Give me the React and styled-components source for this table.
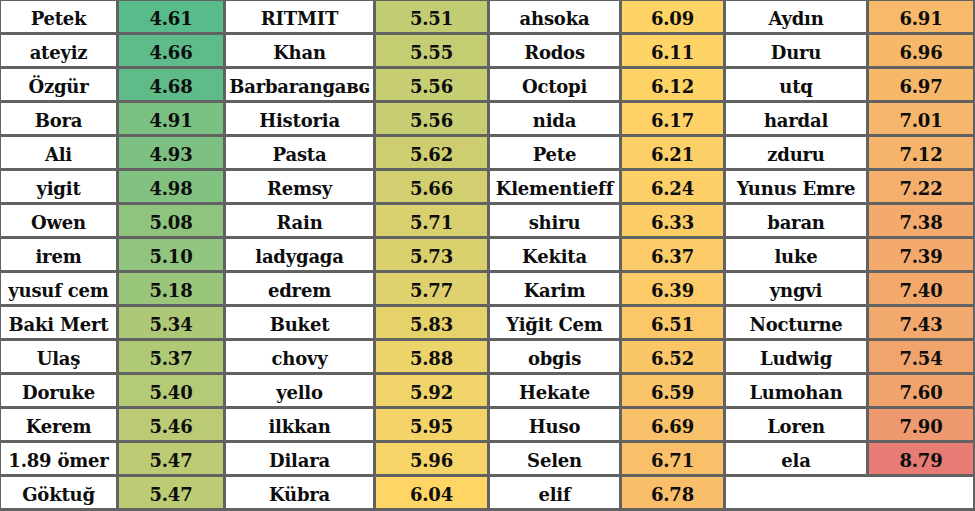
import React from "react";
import styled, { createGlobalStyle } from "styled-components";

const Global = createGlobalStyle`
  html, body { margin: 0; padding: 0; background: #fff; }
  body { font-family: "DejaVu Serif", "Liberation Serif", serif; }
`;

const columns = [
  [
    ["Petek", 4.61], ["ateyiz", 4.66], ["Özgür", 4.68], ["Bora", 4.91], ["Ali", 4.93],
    ["yigit", 4.98], ["Owen", 5.08], ["irem", 5.1], ["yusuf cem", 5.18], ["Baki Mert", 5.34],
    ["Ulaş", 5.37], ["Doruke", 5.4], ["Kerem", 5.46], ["1.89 ömer", 5.47], ["Göktuğ", 5.47],
  ],
  [
    ["RITMIT", 5.51], ["Khan", 5.55], ["Barbaranga\u0299\u0262", 5.56], ["Historia", 5.56], ["Pasta", 5.62],
    ["Remsy", 5.66], ["Rain", 5.71], ["ladygaga", 5.73], ["edrem", 5.77], ["Buket", 5.83],
    ["chovy", 5.88], ["yello", 5.92], ["ilkkan", 5.95], ["Dilara", 5.96], ["Kübra", 6.04],
  ],
  [
    ["ahsoka", 6.09], ["Rodos", 6.11], ["Octopi", 6.12], ["nida", 6.17], ["Pete", 6.21],
    ["Klementieff", 6.24], ["shiru", 6.33], ["Kekita", 6.37], ["Karim", 6.39], ["Yiğit Cem", 6.51],
    ["obgis", 6.52], ["Hekate", 6.59], ["Huso", 6.69], ["Selen", 6.71], ["elif", 6.78],
  ],
  [
    ["Aydın", 6.91], ["Duru", 6.96], ["utq", 6.97], ["hardal", 7.01], ["zduru", 7.12],
    ["Yunus Emre", 7.22], ["baran", 7.38], ["luke", 7.39], ["yngvi", 7.4], ["Nocturne", 7.43],
    ["Ludwig", 7.54], ["Lumohan", 7.6], ["Loren", 7.9], ["ela", 8.79],
  ],
];

const MIN = 4.61;
const MID = 6.04;
const MAX = 8.79;
const GREEN = [87, 187, 138];
const YELLOW = [255, 214, 102];
const RED = [230, 124, 115];

const mix = (a, b, t) => a.map((v, i) => Math.round(v + (b[i] - v) * t));

const scaleColor = (v) => {
  const c = v <= MID
    ? mix(GREEN, YELLOW, (v - MIN) / (MID - MIN))
    : mix(YELLOW, RED, (v - MID) / (MAX - MID));
  return `rgb(${c.join(",")})`;
};

const Board = styled.div`
  display: grid;
  grid-template-columns: 115px 104px 147px 111px 129px 101px 140px 104px;
  grid-auto-rows: 31px;
  gap: 3px;
  padding: 1px 2px 3px 1px;
  width: 975px;
  box-sizing: border-box;
  background: #626262;
`;

const Cell = styled.div`
  display: flex;
  align-items: center;
  justify-content: center;
  padding-top: 3px;
  box-sizing: border-box;
  background: ${(p) => p.$bg || "#fff"};
  color: #0d0d0d;
  font-weight: 700;
  font-size: 18px;
  letter-spacing: -0.2px;
  white-space: nowrap;
  overflow: hidden;
  grid-column: ${(p) => (p.$span ? `span ${p.$span}` : "auto")};
`;

export default function App() {
  const rows = [];
  for (let r = 0; r < 15; r++) {
    columns.forEach((col, c) => {
      const item = col[r];
      if (!item) {
        rows.push(<Cell key={`${r}-${c}`} $span={2} />);
        return;
      }
      rows.push(<Cell key={`${r}-${c}-n`}>{item[0]}</Cell>);
      rows.push(
        <Cell key={`${r}-${c}-v`} style={{ background: scaleColor(item[1]) }}>
          {item[1].toFixed(2)}
        </Cell>
      );
    });
  }
  return (
    <>
      <Global />
      <Board>{rows}</Board>
    </>
  );
}
